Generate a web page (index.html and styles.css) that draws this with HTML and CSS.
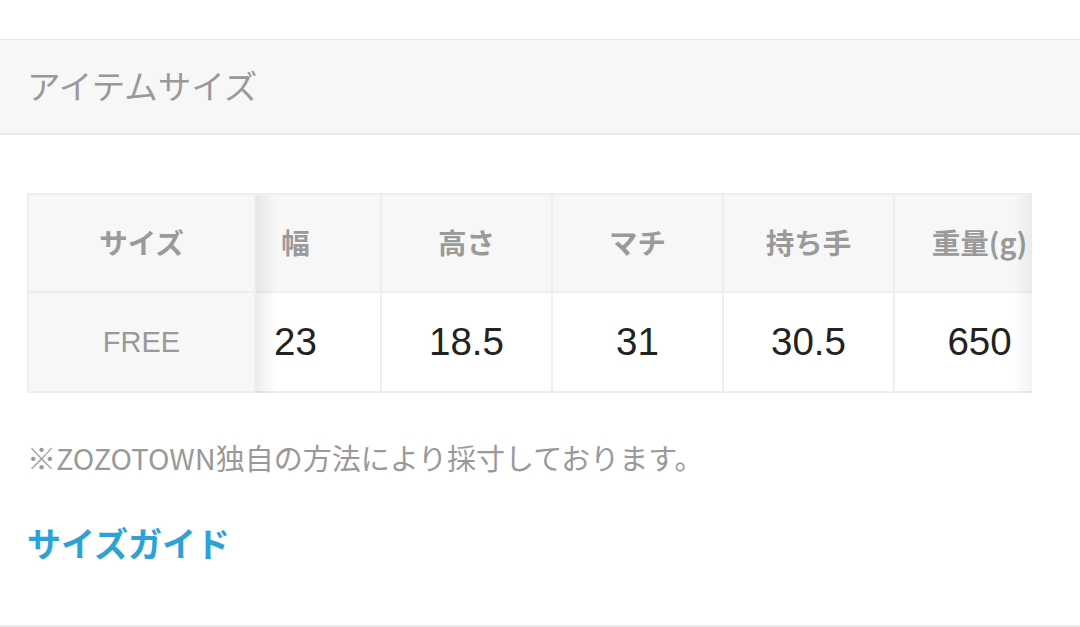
FILE: index.html
```html
<!DOCTYPE html>
<html lang="ja">
<head>
<meta charset="utf-8">
<title>アイテムサイズ</title>
<link rel="stylesheet" href="styles.css">
</head>
<body>
<section class="item-size">
  <h2 class="section-title">アイテムサイズ</h2>
  <div class="size-table">
    <div class="fixed-col">
      <div class="cell head">サイズ</div>
      <div class="cell label">FREE</div>
    </div>
    <div class="scroll">
      <div class="track">
        <div class="cell head">幅</div>
        <div class="cell head">高さ</div>
        <div class="cell head">マチ</div>
        <div class="cell head">持ち手</div>
        <div class="cell head">重量(g)</div>
        <div class="cell value">23</div>
        <div class="cell value">18.5</div>
        <div class="cell value">31</div>
        <div class="cell value">30.5</div>
        <div class="cell value">650</div>
      </div>
    </div>
  </div>
  <p class="note">※ZOZOTOWN独自の方法により採寸しております。</p>
  <a class="guide-link" href="#">サイズガイド</a>
</section>
</body>
</html>
```
FILE: styles.css
```css
html, body {
  margin: 0;
  padding: 0;
  background: #fff;
}
body {
  font-family: "Noto Sans CJK JP", "Liberation Sans", sans-serif;
  width: 1080px;
  height: 627px;
  overflow: hidden;
}
.item-size {
  margin-top: 39px;
  border-top: 1px solid #e9e9e9;
  border-bottom: 2px solid #ebebeb;
  height: 588px;
  box-sizing: border-box;
}
.section-title {
  margin: 0;
  height: 95px;
  box-sizing: border-box;
  background: #f7f7f7;
  border-bottom: 2px solid #e9e9e9;
  padding-left: 27px;
  padding-bottom: 4px;
  display: flex;
  align-items: center;
  font-size: 33.5px;
  font-weight: 400;
  color: #999;
}
.size-table {
  display: flex;
  margin: 58px 0 0 27px;
  width: 1005px;
  border-top: 2px solid #eeeeee;
  border-left: 2px solid #eeeeee;
  box-sizing: border-box;
}
.fixed-col {
  width: 227px;
  flex: none;
  display: flex;
  flex-direction: column;
  position: relative;
  z-index: 1;
}
.cell {
  height: 100px;
  box-sizing: border-box;
  border-right: 2px solid #eeeeee;
  border-bottom: 2px solid #eeeeee;
  display: flex;
  align-items: center;
  justify-content: center;
}
.fixed-col .cell:first-child {
  height: 98px;
}
.cell.head {
  background: #f7f7f7;
  color: #9a9a9a;
  font-size: 28.5px;
  font-weight: 700;
  padding-bottom: 4px;
}
.cell.label {
  background: #f7f7f7;
  color: #999;
  font-family: "Liberation Sans", sans-serif;
  font-size: 29px;
}
.cell.value {
  background: #fff;
  color: #222;
  font-family: "Liberation Sans", sans-serif;
  font-size: 38.5px;
}
.scroll {
  flex: 1;
  overflow: hidden;
  position: relative;
}
.scroll::before {
  content: "";
  position: absolute;
  left: 0;
  top: 0;
  bottom: 0;
  width: 20px;
  background: linear-gradient(to right, rgba(0,0,0,0.07), rgba(0,0,0,0));
  z-index: 2;
}
.scroll::after {
  content: "";
  position: absolute;
  right: 0;
  top: 0;
  bottom: 0;
  width: 18px;
  background: linear-gradient(to right, rgba(0,0,0,0), rgba(0,0,0,0.05));
  z-index: 2;
}
.track {
  display: grid;
  grid-template-columns: repeat(5, 171px);
  grid-template-rows: 98px 100px;
  margin-left: -45px;
  width: 855px;
}
.track .cell.head {
  height: 98px;
}
.note {
  margin: 46px 0 0 27px;
  font-size: 29px;
  color: #999;
  line-height: 36px;
  white-space: nowrap;
}
.guide-link {
  display: inline-block;
  margin: 48px 0 0 27px;
  font-size: 34px;
  font-weight: 700;
  color: #2ca2d7;
  text-decoration: none;
  line-height: 40px;
}
```
